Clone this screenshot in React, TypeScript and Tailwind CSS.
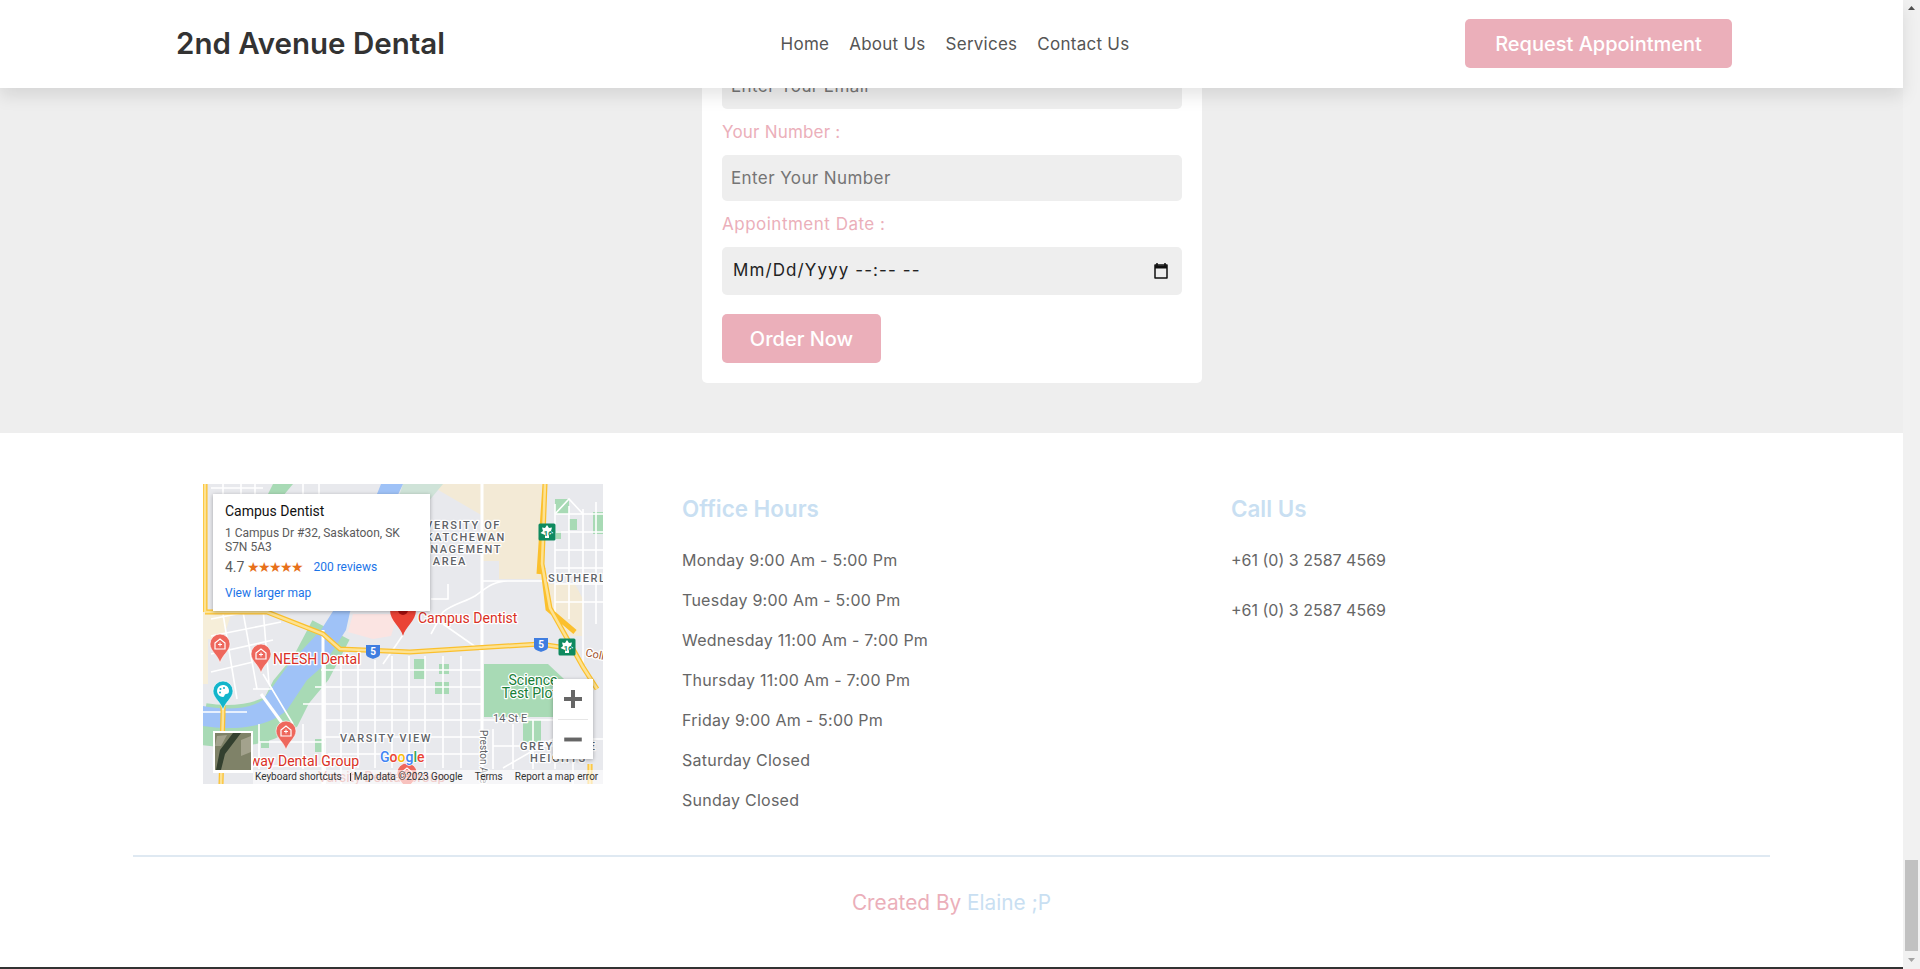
const hours = [
  'Monday 9:00 Am - 5:00 Pm',
  'Tuesday 9:00 Am - 5:00 Pm',
  'Wednesday 11:00 Am - 7:00 Pm',
  'Thursday 11:00 Am - 7:00 Pm',
  'Friday 9:00 Am - 5:00 Pm',
  'Saturday Closed',
  'Sunday Closed',
];

const thinRoads = [
  // east side grid
  'M122 172V300M138 172V300M155 172V284M172 176V284M189 172V284M206 172V284M222 172V284M240 172V284M258 172V284',
  'M118 186H278M112 203H278M100 220H278M120 236H350M120 253H278M125 270H278',
  // sutherland
  'M352 20V130M366 22V135M380 25V180M393 18V140M352 30H400M352 48H400M352 66H400M352 84H400M352 100H400M352 118H400',
  'M352 30L366 15L380 30',
  // downtown, at an angle
  'M8 135L60 125M8 152L78 138M8 170L70 156M8 188L50 178M20 130L34 215M40 128L54 205M60 124L66 200',
  'M60 190L90 240M50 205H70M0 228H44',
  // north of the card
  'M8 4H60M20 0V10M38 0V10M52 0V10M100 0V10M116 0V10',
  // lower left
  'M56 240V285M100 240V285M56 258H122M40 282H122',
  // south east
  'M290 245V285M310 240V285M330 236V285M290 262H350M300 284L350 255M352 236V285M370 236V300M352 255H400',
  // campus
  'M280 97H340M240 128C250 120 262 118 272 112C282 105 290 97 305 97M228 150L240 128M228 115H245V100',
  'M240 140L280 168M180 180L200 151',
];

const Pin = ({ x, y, color = '#ee675c' }: { x: number; y: number; color?: string }) => (
  <g transform={`translate(${x} ${y})`}>
    <path
      d="M0 29C-2 21-10 17-10 10A10 10 0 0 1 10 10C10 17 2 21 0 29Z"
      fill={color}
      stroke="#fff"
      strokeWidth="0.6"
    />
    <path d="M-5 9L0 5L5 9V15H-5Z" fill="none" stroke="#fff" strokeWidth="1.2" />
    <path d="M-2 10.5H2M0 8.5V12.5" stroke="#fff" strokeWidth="1" />
  </g>
);

const Shield = ({ x, y, label }: { x: number; y: number; label: string }) => (
  <g transform={`translate(${x} ${y})`}>
    <path d="M-7 -6H7V3C7 6 2 7 0 8C-2 7-7 6-7 3Z" fill="#3f7de0" />
    <text x="0" y="4" textAnchor="middle" fontSize="10" fontWeight="700" fill="#fff">
      {label}
    </text>
  </g>
);

const Maple = ({ x, y }: { x: number; y: number }) => (
  <g transform={`translate(${x} ${y})`}>
    <rect x="-8.5" y="-8.5" width="17" height="17" rx="1.5" fill="#0f8a5f" />
    <path d="M0 -7L2 -4L5 -4.5L4 -1L6.5 1L2 3V6H-2V3L-6.5 1L-4 -1L-5 -4.5L-2 -4Z" fill="#fff" />
    <text x="1" y="4" textAnchor="middle" fontSize="8" fontWeight="700" fill="#0f8a5f">
      16
    </text>
  </g>
);

const CampusMap = () => (
  <div className="relative h-[300px] w-[400px] shrink-0 overflow-hidden bg-[#e8eaed] font-['Roboto',sans-serif]">
    <svg viewBox="0 0 400 300" className="block h-[300px] w-[400px]" fontFamily="Roboto, sans-serif">
      <rect width="400" height="300" fill="#e8e9ed" />
      {/* land use */}
      <path d="M225 0H340V95H296V77H280V32Z" fill="#f3ead6" />
      <path d="M345 100H372L380 115V152H365L345 125Z" fill="#f3ead6" />
      <path d="M0 125H30L20 155H5V200H0Z" fill="#f6eed9" />
      <path d="M70 0H90L80 12H64Z" fill="#a8dab5" />
      <path d="M200 0H240L215 30H190Z" fill="#cfe3d8" />
      <path d="M150 130H195L188 152L170 155L145 148Z" fill="#fbe4e2" />
      <path d="M281 180H345L377 210V233H281Z" fill="#a8dab5" />
      <path d="M320 236H338V258H320ZM211 175H222V195H211ZM236 180H246V190H236ZM232 198H246V210H232Z" fill="#a8dab5" />
      <path d="M352 15H366V30H352ZM390 28H400V50H390ZM366 35H374V46H366ZM352 47H358V55H352Z" fill="#a8dab5" />
      <path d="M82 240H92V252H82ZM112 255H122V268H112ZM58 250H66V264H58Z" fill="#a8dab5" />
      {/* river */}
      <path d="M128 146L108 184L88 208L78 228C60 240 30 245 0 240" fill="none" stroke="#a8dab5" strokeWidth="42" />
      <path
        d="M178 0H200L186 30L165 80L147 128L143 146L120 182L104 196L84 226C62 246 25 246 0 242V222C20 226 45 226 60 216L86 180L118 146L132 124L150 70Z"
        fill="#9fc2f7"
      />
      {/* streets */}
      {thinRoads.map((d) => (
        <path key={d} d={d} stroke="#fff" strokeWidth="1.6" fill="none" />
      ))}
      <path d="M279 0V300" stroke="#fff" strokeWidth="3" />
      <path d="M120 146V300" stroke="#fff" strokeWidth="3" />
      <path d="M58 210L90 254" stroke="#fff" strokeWidth="3" />
      {/* arterials */}
      <path
        d="M2 0V128M2 128H64L120 150L137 165L207 168L337 160L370 165M342 0L339 80L347 124L380 183L394 205M342 0L336 90M20 200V230L18 300M387 280V300M340 85L345 125L372 148"
        fill="none"
        stroke="#fbc02d"
        strokeWidth="5"
      />
      <path
        d="M2 0V128M2 128H64L120 150L137 165L207 168L337 160L370 165M342 0L339 80L347 124L380 183L394 205M20 200V230L18 300M387 280V300"
        fill="none"
        stroke="#fde293"
        strokeWidth="2.5"
      />
      {/* labels, white halo behind the letters */}
      <g paintOrder="stroke" stroke="#fff" strokeWidth="2.5" strokeLinejoin="round">
        <g fontSize="11" fontWeight="500" fill="#5f6368" letterSpacing="1.6" textAnchor="end">
          <text x="298" y="45">UNIVERSITY OF</text>
          <text x="303" y="57">SASKATCHEWAN</text>
          <text x="299" y="69">MANAGEMENT</text>
          <text x="264" y="81">AREA</text>
        </g>
        <g fontSize="11" fontWeight="500" fill="#5f6368" letterSpacing="1.6">
          <text x="345" y="98">SUTHERLAND</text>
          <text x="137" y="258">VARSITY VIEW</text>
          <text x="317" y="266">GREYSTONE</text>
          <text x="327" y="278">HEIGHTS</text>
        </g>
        <g fontSize="14" fill="#d93025">
          <text x="215" y="139">Campus Dentist</text>
          <text x="70" y="180">NEESH Dental</text>
          <text x="10" y="282">Broadway Dental Group</text>
        </g>
        <g fontSize="14" fill="#188038" textAnchor="middle">
          <text x="330" y="201">Science</text>
          <text x="330" y="214">Test Plots</text>
        </g>
        <text x="290" y="238" fontSize="11" fill="#5f6368">14 St E</text>
        <text x="382" y="172" fontSize="11" fill="#a0522d" transform="rotate(12 382 172)">College Dr</text>
        <text x="277" y="246" fontSize="10" fill="#5f6368" transform="rotate(90 277 246)">Preston Ave</text>
      </g>
      <text x="115" y="298" fontSize="14" fill="#d9827d">Varsity Dental Group</text>
      <Shield x={170} y={167} label="5" />
      <Shield x={338} y={160} label="5" />
      <Maple x={344} y={48} />
      <Maple x={364} y={163} />
      <Pin x={17} y={150} />
      <Pin x={58} y={160} />
      <Pin x={83} y={237} />
      <Pin x={204} y={279} />
      <g transform="translate(20 197)">
        <path d="M0 29C-2 21-10 17-10 10A10 10 0 0 1 10 10C10 17 2 21 0 29Z" fill="#12b5cb" stroke="#fff" strokeWidth="0.6" />
        <path d="M0 4A6 6 0 1 0 0 16C2 16 1 13 3 13C5 13 6 12 6 10C6 6 3 4 0 4Z" fill="#fff" />
        <circle cx="-2.5" cy="8" r="1" fill="#12b5cb" />
        <circle cx="1" cy="7" r="1" fill="#12b5cb" />
        <circle cx="-3" cy="11.5" r="1" fill="#12b5cb" />
      </g>
      {/* selected place */}
      <g transform="translate(200 124)">
        <path d="M0 28C-2 19-13 13-13 2A13 13 0 0 1 13 2C13 13 2 19 0 28Z" fill="#ea4335" />
        <circle cx="0" cy="2" r="5" fill="#a50e0e" />
      </g>
      {/* satellite thumbnail */}
      <rect x="10" y="247" width="40" height="42" fill="#fff" />
      <rect x="12" y="249" width="36" height="37" fill="#7f8268" />
      <path d="M30 249L38 249L22 270L18 286L13 286L17 266Z" fill="#33402f" />
      <path d="M38 256L48 252V268L38 272ZM14 252L24 251L18 262L12 262Z" fill="#a3a28d" />
      <text x="177" y="278" fontSize="14" fontWeight="500" paintOrder="stroke" stroke="#fff" strokeWidth="1.5">
        <tspan fill="#4285f4">G</tspan>
        <tspan fill="#ea4335">o</tspan>
        <tspan fill="#fbbc05">o</tspan>
        <tspan fill="#4285f4">g</tspan>
        <tspan fill="#34a853">l</tspan>
        <tspan fill="#ea4335">e</tspan>
      </text>
    </svg>

    <div className="absolute left-[10px] top-[10px] h-[117px] w-[217px] bg-white pl-3 pt-[7px] shadow-[0_1px_4px_rgba(0,0,0,0.3)]">
      <div className="text-[14px] font-normal leading-[20px] text-[#111]">Campus Dentist</div>
      <div className="mt-[5px] w-[190px] text-[12px] leading-[14px] text-[#5b5b5b]">
        1 Campus Dr #32, Saskatoon, SK S7N 5A3
      </div>
      <div className="mt-[3px] flex items-center text-[14px] leading-[20px] text-[#5b5b5b]">
        <span>4.7</span>
        <span className="ml-[3px] text-[14px] leading-[20px] tracking-[-2px] text-[#e7711b]">★★★★★</span>
        <span className="ml-[11px] text-[12px] text-[#1a73e8]">200 reviews</span>
      </div>
      <div className="mt-[9px] text-[12px] leading-[14px] text-[#1a73e8]">View larger map</div>
    </div>

    <div className="absolute left-[350px] top-[195px] flex h-[80px] w-[40px] flex-col items-center bg-white shadow-[0_1px_4px_rgba(0,0,0,0.3)]">
      <svg viewBox="0 0 40 40" className="h-[40px] w-[40px] shrink-0">
        <path d="M20 11V29M11 20H29" stroke="#666" strokeWidth="4" />
      </svg>
      <div className="h-px w-[30px] bg-[#e6e6e6]" />
      <svg viewBox="0 0 40 40" className="h-[39px] w-[40px] shrink-0">
        <path d="M11 20H29" stroke="#666" strokeWidth="4" />
      </svg>
    </div>

    <div className="absolute bottom-0 left-[50px] right-0 flex h-[14px] items-center bg-white/60 pl-[2px] text-[10px] leading-[14px] text-[#333]">
      <span>Keyboard shortcuts</span>
      <span className="ml-[8px] mr-[3px] h-[8px] w-px bg-[#333]" />
      <span>Map data ©2023 Google</span>
      <span className="ml-[12px]">Terms</span>
      <span className="ml-[12px]">Report a map error</span>
    </div>
  </div>
);

const Field = ({ label, placeholder }: { label: string; placeholder: string }) => (
  <div>
    <label className="block text-[17px] leading-[26px] tracking-[0.2px] text-[#ebafba]">{label}</label>
    <input
      type="text"
      placeholder={placeholder}
      className="mt-[10px] h-[46px] w-full rounded-[5px] bg-[#eeeeee] px-[9px] text-[17px] capitalize tracking-[0.4px] outline-none placeholder:text-[#757575]"
    />
  </div>
);

const App = () => {
  return (
    <div className="flex h-[969px] w-full overflow-hidden bg-white font-['Inter',sans-serif]">
      <div className="flex min-w-0 flex-1 flex-col">
        <header className="relative z-10 flex h-[88px] shrink-0 items-center justify-between bg-white pl-[176px] pr-[171px] shadow-[0_8px_16px_rgba(0,0,0,0.1)]">
          <div className="mb-[2px] text-[29.5px] font-semibold text-[#333333]">2nd Avenue Dental</div>
          <nav className="flex gap-[20px] pt-px text-[17px] tracking-[0.25px] text-[#555555]">
            <a>Home</a>
            <a>About Us</a>
            <a>Services</a>
            <a>Contact Us</a>
          </nav>
          <button className="mb-px h-[49px] w-[267px] rounded-[5px] bg-[#ebafba] text-[20px] font-medium text-white">
            Request Appointment
          </button>
        </header>

        <section className="flex h-[345px] shrink-0 justify-center overflow-hidden bg-[#eeeeee] pl-[1px]">
          <div className="-mt-[25px] h-[320px] w-[500px] rounded-b-[5px] bg-white px-[20px]">
            <input
              type="text"
              placeholder="Enter Your Email"
              className="h-[46px] w-full rounded-[5px] bg-[#eeeeee] px-[9px] text-[17px] capitalize tracking-[0.4px] outline-none placeholder:text-[#757575]"
            />
            <div className="mt-[10px]">
              <Field label="Your Number :" placeholder="Enter Your Number" />
            </div>
            <div className="mt-[10px]">
              <label className="block text-[17px] leading-[26px] tracking-[0.5px] text-[#ebafba]">
                Appointment Date :
              </label>
              <div className="mt-[10px] flex h-[48px] w-full items-center justify-between rounded-[5px] bg-[#eeeeee] pl-[11px] pr-[14px] text-[17px] tracking-[1.1px] text-[#222]">
                <span>Mm/Dd/Yyyy --:-- --</span>
                <svg viewBox="0 0 14 16" className="h-[16px] w-[14px]">
                  <path d="M3 0V3M11 0V3" stroke="#111" strokeWidth="1.5" />
                  <path d="M1 2H13V15H1Z" fill="none" stroke="#111" strokeWidth="1.5" strokeLinejoin="round" />
                  <path d="M1 2.5H13V5.5H1Z" fill="#111" />
                </svg>
              </div>
            </div>
            <button className="mt-[19px] h-[49px] w-[159px] rounded-[5px] bg-[#ebafba] text-[20px] font-medium text-white">
              Order Now
            </button>
          </div>
        </section>

        <footer className="flex min-h-0 flex-1 flex-col bg-white">
          <div className="mx-[133px] flex h-[424px] shrink-0 border-b-2 border-[#dfe9f2] pl-[70px] pt-[51px]">
            <CampusMap />
            <div className="ml-[79px] w-[549px]">
              <h3 className="mt-[9px] text-[22.4px] font-semibold leading-[32px] text-[#c9dff2]">Office Hours</h3>
              <ul className="mt-[22px] flex flex-col gap-[14px] text-[16px] leading-[26px] tracking-[0.25px] text-[#666666]">
                {hours.map((h) => (
                  <li key={h}>{h}</li>
                ))}
              </ul>
            </div>
            <div>
              <h3 className="mt-[9px] text-[22.4px] font-semibold leading-[32px] text-[#c9dff2]">Call Us</h3>
              <div className="mt-[22px] flex flex-col gap-[24px] text-[16px] leading-[26px] text-[#666666]">
                <div>+61 (0) 3 2587 4569</div>
                <div>+61 (0) 3 2587 4569</div>
              </div>
            </div>
          </div>
          <div className="mt-[30px] text-center text-[20.8px] leading-[32px] text-[#ebafba]">
            Created By <span className="text-[#c9dff2]">Elaine ;P</span>
          </div>
        </footer>
        <div className="h-[2px] shrink-0 bg-[#333333]" />
      </div>

      {/* browser scrollbar */}
      <div className="flex w-[17px] shrink-0 flex-col items-center bg-[#f1f1f1]">
        <svg viewBox="0 0 17 17" className="h-[17px] w-[17px] shrink-0">
          <path d="M5 10L8.5 6L12 10Z" fill="#505050" />
        </svg>
        <div className="mt-[843px] h-[91px] w-[13px] shrink-0 bg-[#c1c1c1]" />
        <svg viewBox="0 0 17 17" className="h-[17px] w-[17px] shrink-0">
          <path d="M5 7L8.5 11L12 7Z" fill="#a3a3a3" />
        </svg>
      </div>
    </div>
  );
};

export default App;
